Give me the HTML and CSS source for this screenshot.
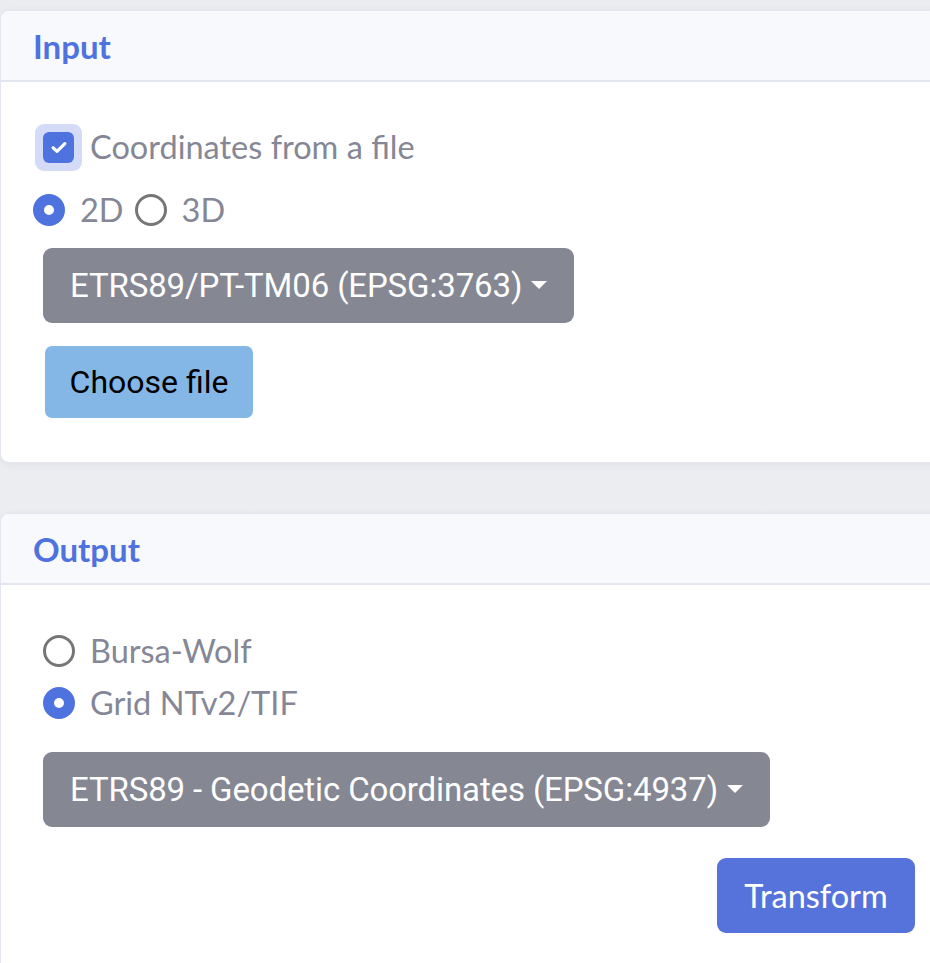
FILE: index.html
```html
<!DOCTYPE html>
<html>
<head>
<meta charset="utf-8">
<link rel="stylesheet" href="styles.css">
</head>
<body>
<div class="page">
  <section class="card card-input">
    <header class="card-header"><h2 class="card-title">Input</h2></header>
    <div class="card-body">
      <label class="check-row">
        <span class="check-focus"><span class="check-box">
          <svg viewBox="0 0 16 13" width="16" height="13"><path d="M2.2 6.8 L6 10.4 L13.8 2.6" fill="none" stroke="#fff" stroke-width="3.2" stroke-linecap="round" stroke-linejoin="round"/></svg>
        </span></span>
        <span class="label-text">Coordinates from a file</span>
      </label>
      <div class="radio-inline-row">
        <label class="radio-inline"><span class="radio checked"></span><span class="label-text">2D</span></label>
        <label class="radio-inline"><span class="radio"></span><span class="label-text">3D</span></label>
      </div>
      <button class="dropdown dropdown-1">ETRS89/PT-TM06 (EPSG:3763)<span class="caret"></span></button>
      <button class="file-btn">Choose file</button>
    </div>
  </section>

  <section class="card card-output">
    <header class="card-header"><h2 class="card-title">Output</h2></header>
    <div class="card-body">
      <label class="radio-row"><span class="radio"></span><span class="label-text">Bursa-Wolf</span></label>
      <label class="radio-row"><span class="radio checked"></span><span class="label-text">Grid NTv2/TIF</span></label>
      <button class="dropdown dropdown-2">ETRS89 - Geodetic Coordinates (EPSG:4937)<span class="caret"></span></button>
      <div class="actions"><button class="primary-btn">Transform</button></div>
    </div>
  </section>
</div>
</body>
</html>
```

FILE: styles.css
```css
* { box-sizing: border-box; }
html, body { margin: 0; padding: 0; }
body {
  background: linear-gradient(180deg, #ebecf0 0%, #eceef2 100%);
  font-family: "Lato", "Noto Sans", sans-serif;
  color: #858796;
  width: 930px;
  height: 963px;
  overflow: hidden;
}
.page { padding-top: 10px; }
.card {
  background: #fff;
  border: 1px solid #e3e6f0;
  border-radius: 9px;
  margin-right: -20px;
  box-shadow: 0 2px 8px rgba(58, 59, 69, 0.06);
  overflow: hidden;
}
.card-output { margin-top: 50px; }
.card-header {
  background: #f8f9fc;
  border-bottom: 2px solid #e3e6f0;
  height: 71px;
  display: flex;
  align-items: center;
  padding-left: 32px;
}
.card-title {
  margin: 0;
  font-size: 33px;
  font-weight: 700;
  color: #4e73df;
  line-height: 1;
  padding-top: 1px;
}
.card-input .card-body { padding: 42px 0 43px 0; height: 380px; }
.label-text { font-size: 32.5px; line-height: 1; color: #858796; }

.check-row { display: flex; align-items: center; margin-left: 34px; height: 47px; }
.check-focus {
  width: 47px; height: 47px;
  background: #d3dbf6;
  border-radius: 9px;
  display: flex; align-items: center; justify-content: center;
  margin-right: 8px;
}
.check-box {
  width: 31px; height: 31px;
  background: #4e73df;
  border-radius: 6px;
  display: flex; align-items: center; justify-content: center;
}
.check-box svg { display: block; }

.radio-inline-row { display: flex; align-items: center; margin: 23px 0 0 32px; height: 32px; }
.radio-inline { display: flex; align-items: center; margin-right: 11px; }
.radio-inline .radio { margin-right: 15px; }
.radio {
  width: 32px; height: 32px;
  border-radius: 50%;
  border: 3px solid #767676;
  background: #fff;
  flex: none;
}
.radio.checked {
  border: 11px solid #4e73df;
  background: #fff;
}

.dropdown {
  display: flex; align-items: center;
  margin: 22px 0 0 42px;
  height: 75px;
  padding: 0 27px;
  background: #858793;
  color: #fff;
  border: none;
  border-radius: 9px;
  font-family: "Roboto", "Liberation Sans", sans-serif;
  font-size: 33px;
  letter-spacing: -0.13px;
}
.caret {
  width: 0; height: 0;
  margin-left: 9px;
  border-left: 8px solid transparent;
  border-right: 8px solid transparent;
  border-top: 8px solid #fff;
  margin-top: -2px;
}
.file-btn {
  display: block;
  margin: 23px 0 0 44px;
  width: 208px; height: 72px;
  background: #85b7e6;
  border: none;
  border-radius: 7px;
  color: #000;
  font-family: "Roboto", "Liberation Sans", sans-serif;
  font-size: 32px;
  padding: 0;
}

.card-output .card-body { padding: 50px 0 60px 0; height: 420px; }
.radio-row { display: flex; align-items: center; margin-left: 42px; height: 32px; }
.radio-row + .radio-row { margin-top: 20px; }
.radio-row .radio { margin-right: 15px; }
.card-output .dropdown { margin-top: 33px; }
.actions { display: flex; justify-content: flex-end; margin-top: 31px; padding-right: 34px; }
.primary-btn {
  width: 198px; height: 75px;
  background: #5673db;
  color: #fff;
  border: none;
  border-radius: 9px;
  font-family: "Lato", "Noto Sans", sans-serif;
  font-size: 32.5px;
  padding: 0;
}
```
